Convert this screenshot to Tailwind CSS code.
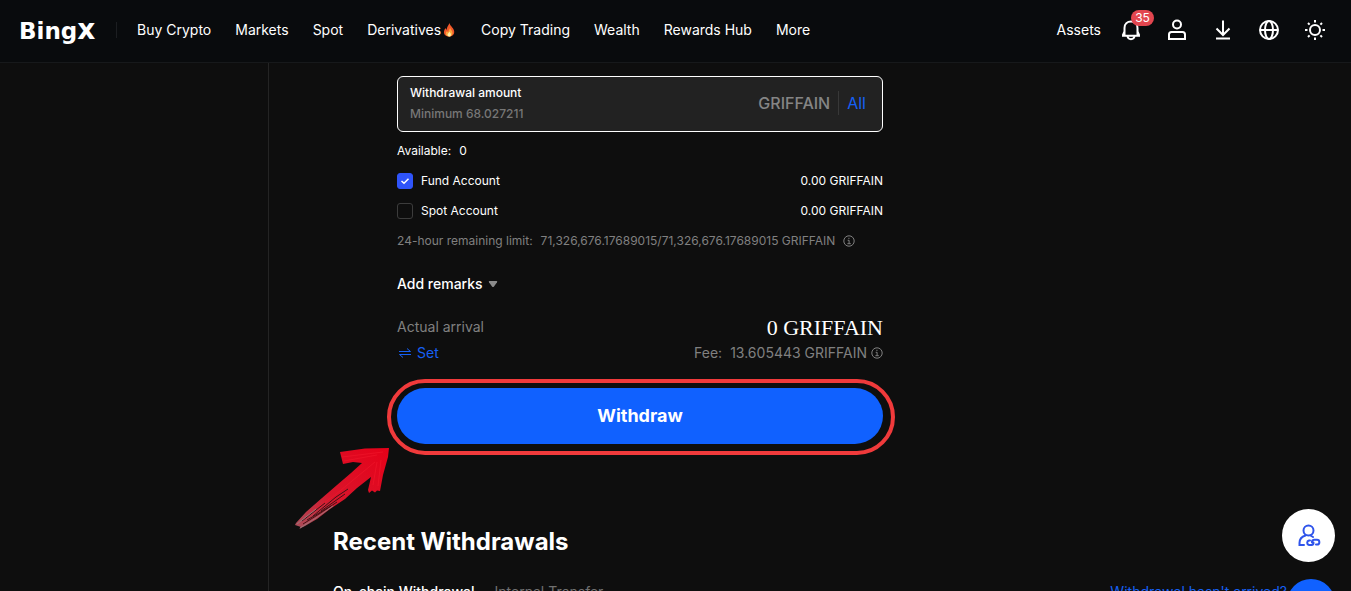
<!DOCTYPE html>
<html lang="en">
<head>
  <meta charset="UTF-8" />
  <meta name="viewport" content="width=device-width, initial-scale=1.0" />
  <title>Withdraw | BingX</title>
  <script src="https://cdn.jsdelivr.net/npm/@tailwindcss/browser@4"></script>
</head>
<body class="h-screen overflow-hidden flex flex-col bg-[#0e0e0e] text-white font-['Inter',sans-serif]">

  <!-- Top bar -->
  <header class="flex items-center h-[63px] shrink-0 pl-[19px] pr-6 pb-0.5 bg-[#090b0d] border-b border-[#17191b] text-sm">
    <a href="#" class="w-[78px] flex items-baseline font-['DejaVu_Sans',sans-serif] font-bold text-[23px] leading-6">Bing<span class="text-[28px] leading-6">x</span></a>
    <span class="ml-[19px] mr-5 w-px h-4 bg-[#1c1e21]"></span>
    <nav class="flex items-center gap-6 whitespace-nowrap">
      <a href="#">Buy Crypto</a>
      <a href="#">Markets</a>
      <a href="#">Spot</a>
      <a href="#" class="flex items-center">Derivatives
        <svg class="w-4 h-4" viewBox="0 0 16 16" aria-hidden="true">
          <path d="M8.500 1C9 4 12 5 13 8.500C14 12 11.500 14.500 8.500 14.500C5 14.500 2.500 12.500 3 9.500C3.200 8 4 7 4.500 6C5 7 5.200 7.500 5.700 7.800C5.700 5 7.500 3.500 8.500 1Z" fill="#f0582a" />
          <path d="M9 5.500C9.500 8 12 9 11.500 11.500C11 13.500 10 14.500 8.400 14.500C6 14.500 4.500 13 4.800 11C5 10 5.600 9.500 6 9C6.500 10 7 10 7.300 10C7.500 8 9 7.500 9 5.500Z" fill="#fba63c" />
          <path d="M8.500 9.500C9 11 10.200 11.500 9.900 13C9.600 14 9 14.500 8.300 14.500C7 14.500 6.300 13.500 6.600 12.300C7 11.300 8 11 8.500 9.500Z" fill="#fff0a8" />
        </svg>
      </a>
      <a href="#">Copy Trading</a>
      <a href="#">Wealth</a>
      <a href="#">Rewards Hub</a>
      <a href="#">More</a>
    </nav>

    <div class="ml-auto flex items-center gap-[22px]">
      <a href="#" class="-mr-1">Assets</a>
      <button class="relative" aria-label="Notifications">
        <svg class="w-6 h-6" viewBox="0 0 24 24" fill="none" stroke="currentColor" stroke-width="2">
          <path d="M3 17.800H21M5.500 17.500V10C5.500 6 8.300 3.500 12 3.500S18.500 6 18.500 10V17.500M5.500 13.500L3.800 17.500M18.500 13.500L20.200 17.500" />
          <path d="M8.500 18C8.700 20 10 21.200 12 21.200S15.300 20 15.500 18" />
        </svg>
        <span class="absolute left-3 -top-2 h-4 w-[23px] rounded-full bg-[#e2464f] text-xs leading-4 text-center">35</span>
      </button>
      <button aria-label="Profile">
        <svg class="w-6 h-6" viewBox="0 0 24 24" fill="none" stroke="currentColor" stroke-width="2">
          <circle cx="12" cy="6.500" r="4" />
          <path d="M4 21V16.500Q4 14 6.500 14H17.500Q20 14 20 16.500V21Z" />
        </svg>
      </button>
      <button aria-label="Download">
        <svg class="w-6 h-6" viewBox="0 0 24 24" fill="none" stroke="currentColor" stroke-width="2">
          <path d="M12 2.500V17M5.500 10.500L12 17L18.500 10.500M5 20.500H19" />
        </svg>
      </button>
      <button aria-label="Language">
        <svg class="w-6 h-6" viewBox="0 0 24 24" fill="none" stroke="currentColor" stroke-width="2">
          <circle cx="12" cy="12" r="9" />
          <ellipse cx="12" cy="12" rx="4" ry="9" />
          <path d="M3 12H21" />
        </svg>
      </button>
      <button aria-label="Theme">
        <svg class="w-6 h-6" viewBox="0 0 24 24" fill="none" stroke="currentColor" stroke-width="2">
          <circle cx="12" cy="12" r="5" />
          <path d="M12 2V4.500M12 19.500V22M2 12H4.500M19.500 12H22M5 5L6.600 6.600M17.400 17.400L19 19M5 19L6.600 17.400M17.400 6.600L19 5" />
        </svg>
      </button>
    </div>
  </header>

  <div class="flex flex-1">
    <aside class="w-[269px] shrink-0 border-r border-[#242424]"></aside>

    <main class="flex-1 px-16 pt-[13px]">
      <form class="ml-16 w-[486px] max-w-full">
        <div class="flex items-center h-14 px-3 pb-0.5 border border-white rounded-md bg-[#222]">
          <div class="flex-1">
            <label for="amount" class="block text-xs leading-5 font-medium">Withdrawal amount</label>
            <input id="amount" type="text" placeholder="Minimum 68.027211" class="block w-full h-5 text-xs font-medium bg-transparent outline-none placeholder:text-[#777]" />
          </div>
          <span class="text-base font-medium text-[#858585]">GRIFFAIN</span>
          <span class="mx-2 w-px h-6 bg-[#383838]"></span>
          <button type="button" class="mr-1 text-base text-[#1660f5]">All</button>
        </div>

        <div class="mt-1 text-xs">
          <div class="flex items-center gap-2 h-[30px]"><span>Available:</span><span>0</span></div>
          <div class="flex items-center justify-between h-[30px]">
            <label class="flex items-center gap-2">
              <span class="relative flex">
                <input type="checkbox" checked class="peer appearance-none w-4 h-4 rounded-[3px] border border-[#3c3c3c] checked:bg-[#2f54fa] checked:border-[#2f54fa]" />
                <svg class="absolute inset-0 w-4 h-4 hidden peer-checked:block" viewBox="0 0 16 16" fill="none" stroke="white" stroke-width="1.500"><path d="M4.500 8L7 10.300L11.500 5.800" /></svg>
              </span>
              Fund Account
            </label>
            <span>0.00 GRIFFAIN</span>
          </div>
          <div class="flex items-center justify-between h-[30px]">
            <label class="flex items-center gap-2">
              <span class="relative flex">
                <input type="checkbox" class="peer appearance-none w-4 h-4 rounded-[3px] border border-[#3c3c3c] checked:bg-[#2f54fa] checked:border-[#2f54fa]" />
                <svg class="absolute inset-0 w-4 h-4 hidden peer-checked:block" viewBox="0 0 16 16" fill="none" stroke="white" stroke-width="1.500"><path d="M4.500 8L7 10.300L11.500 5.800" /></svg>
              </span>
              Spot Account
            </label>
            <span>0.00 GRIFFAIN</span>
          </div>
          <div class="flex items-center gap-2 h-[30px] text-[#808080] whitespace-nowrap">
            <span>24-hour remaining limit:</span>
            <span>71,326,676.17689015/71,326,676.17689015 GRIFFAIN</span>
            <svg class="w-3 h-3" viewBox="0 0 12 12" fill="none" stroke="currentColor"><circle cx="6" cy="6" r="5.200" /><path d="M4.700 5.300H6.100V8.700M4.400 8.700H7.800M5.300 3.300H6.500" /></svg>
          </div>
        </div>

        <button type="button" class="mt-[18px] flex items-center gap-1 text-sm font-medium">
          Add remarks
          <svg class="w-3 h-3" viewBox="0 0 12 12"><path d="M2.500 3H9.500Q10.800 3 10 4.200L7 8.500Q6 9.500 5 8.500L2 4.200Q1.200 3 2.500 3Z" fill="#8b8b8b" /></svg>
        </button>

        <div class="mt-5 flex items-center justify-between h-[26px]">
          <span class="text-sm text-[#808080]">Actual arrival</span>
          <span class="font-['Liberation_Serif',serif] text-[22px] font-medium">0 GRIFFAIN</span>
        </div>
        <div class="flex items-center justify-between h-[26px] text-sm">
          <button type="button" class="flex items-center gap-1 text-[#1660f5]">
            <svg class="w-4 h-4" viewBox="0 0 16 16" fill="none" stroke="currentColor"><path d="M2 6.500H13.500L10 3.500M14 9.500H2.500L6 12.500" /></svg>
            Set
          </button>
          <span class="flex items-center gap-1 text-[#808080]">
            <span class="mr-1">Fee:</span>13.605443 GRIFFAIN
            <svg class="w-3 h-3" viewBox="0 0 12 12" fill="none" stroke="currentColor"><circle cx="6" cy="6" r="5.200" /><path d="M4.700 5.300H6.100V8.700M4.400 8.700H7.800M5.300 3.300H6.500" /></svg>
          </span>
        </div>

        <!-- Submit button, with the highlight ring and arrow over it -->
        <div class="relative mt-[22px]">
          <button type="button" class="w-full h-14 rounded-full bg-[#1061ff] text-lg font-bold">Withdraw</button>
          <span class="absolute -left-2.5 -right-3 -top-[9px] -bottom-[11px] border-4 border-[#f03a3b] rounded-[38px] pointer-events-none"></span>
          <svg class="absolute -left-28 top-[52px] w-[120px] h-[100px] pointer-events-none" viewBox="0 0 120 100">
            <defs>
              <linearGradient id="brush" x1="1" y1="0" x2="0" y2="1">
                <stop offset="0" stop-color="#e60018" />
                <stop offset=".6" stop-color="#d9152b" />
                <stop offset="1" stop-color="#a8505c" />
              </linearGradient>
            </defs>
            <path d="M55 12L80 8.500L104 8L103 17L98 35L95 51L92 50.500L90 52.500L87 50.500L84 53L83 50L86 37L72 48L60 59L45 69L32 79L20 86L14 89L16 87L10 85L11 83L21 72L37 58L52 45L66 33L77 23L68 22L58 24Z" fill="url(#brush)" />
            <path d="M57 17L98 12M59 21L92 15M92 22L88 45M96 20L93 46M90 22L50 55L26 72" stroke="#f2182c" fill="none" opacity=".6" />
            <path d="M17 81L40 63M28 76L51 57L63 49M22 80L46 66M36 71L60 54M18 84L34 74L52 62" stroke="#401216" fill="none" />
            <path d="M12 84L31 69M15 88L31 78L48 66" stroke="#97777b" fill="none" />
          </svg>
        </div>
      </form>

      <h2 class="mt-[82px] text-2xl leading-8 font-bold">Recent Withdrawals</h2>
      <div class="mt-6 flex items-center justify-between text-sm leading-5">
        <div class="flex gap-5">
          <a href="#" class="font-medium">On-chain Withdrawal</a>
          <a href="#" class="text-[#707070]">Internal Transfer</a>
        </div>
        <a href="#" class="text-[#1660f5]">Withdrawal hasn't arrived?</a>
      </div>
    </main>
  </div>

  <!-- Floating help buttons -->
  <div class="fixed right-4 top-[509px] flex flex-col items-end gap-[17px]">
    <button class="flex items-center justify-center w-[53px] h-[53px] rounded-full bg-white" aria-label="Support">
      <svg class="w-6 h-6" viewBox="0 0 24 24" fill="none" stroke="#2f54eb" stroke-width="2" stroke-linecap="round">
        <circle cx="11.500" cy="6.500" r="5" />
        <path d="M8.500 11.500C5 12.500 2.500 15.500 2.500 19V21H7M13.500 11.500L16 13" />
        <path d="M13 16.500H12A2.300 2.300 0 0 0 12 21H14.500A2.300 2.300 0 0 0 16.500 18.500M19 20.500H20A2.300 2.300 0 0 0 20 15.800H17A2.300 2.300 0 0 0 15 18.300" />
      </svg>
    </button>
    <button class="w-12 h-12 rounded-full bg-[#1061ff]" aria-label="Chat"></button>
  </div>
</body>
</html>
